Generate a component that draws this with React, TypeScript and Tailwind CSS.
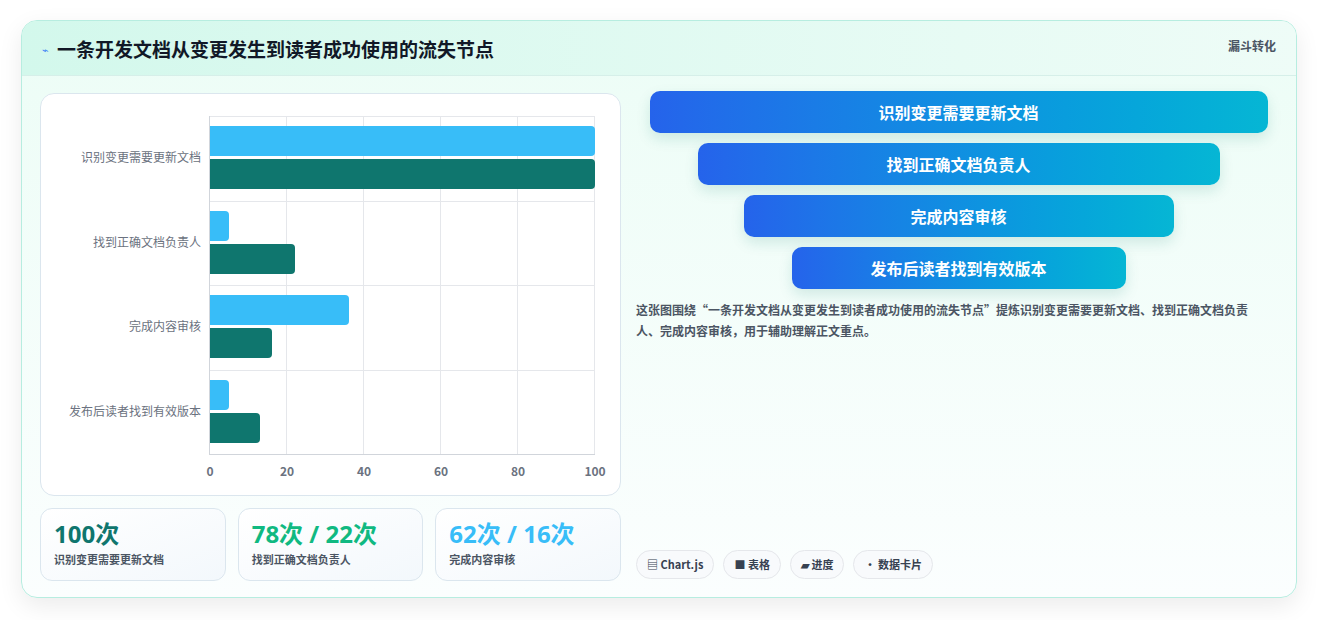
import React from "react";

const cats = [
  { l: "识别变更需要更新文档", a: 100, b: 100 },
  { l: "找到正确文档负责人", a: 5, b: 22 },
  { l: "完成内容审核", a: 36, b: 16 },
  { l: "发布后读者找到有效版本", a: 5, b: 13 },
];
const funnel = [
  { t: "识别变更需要更新文档", w: 618 },
  { t: "找到正确文档负责人", w: 522 },
  { t: "完成内容审核", w: 430 },
  { t: "发布后读者找到有效版本", w: 334 },
];
const font = { fontFamily: '"Noto Sans CJK SC", "Noto Sans", sans-serif' };

export default function App() {
  return (
    <div className="w-[1318px] h-[620px] bg-white pt-[20px] pl-[21px]" style={font}>
      <div className="w-[1276px] h-[578px] rounded-[16px] border border-[#b7ede0] bg-gradient-to-b from-[#ecfdf6] to-[#fbfefe] shadow-[0_8px_24px_rgba(0,0,0,0.08)] overflow-hidden flex flex-col">
        <div className="h-[55px] shrink-0 flex items-start justify-between px-[20px] pt-[14px] bg-gradient-to-r from-[#d3f8ec] to-[#eefcf7] border-b border-[#d6efe9]">
          <div className="flex items-center gap-[8px]">
            <span className="text-[#3b82f6] text-[11px]">⌁</span>
            <span className="text-[19px] font-bold text-[#111827] leading-[28px]">一条开发文档从变更发生到读者成功使用的流失节点</span>
          </div>
          <span className="text-[12px] font-bold text-[#4b5563] mt-[2px]">漏斗转化</span>
        </div>
        <div className="flex flex-1 pl-[18px] pt-[17px] gap-[15px]">
          <div className="w-[581px] flex flex-col gap-[12px]">
            <div className="h-[403px] rounded-[14px] border border-[#dbe6ee] bg-white relative">
              <div className="absolute left-[168px] top-[22px] w-[386px] h-[339px] border-l border-b border-[#d1d5db]">
                {[1, 2, 3, 4, 5].map((i) => (
                  <div key={i} className="absolute top-0 bottom-0 w-px bg-[#e5e7eb]" style={{ left: i * 77 - 1 }} />
                ))}
                {[1, 2, 3].map((i) => (
                  <div key={i} className="absolute left-0 right-0 h-px bg-[#e5e7eb]" style={{ top: i * 84.5 }} />
                ))}
                <div className="absolute left-0 right-0 top-0 h-px bg-[#e5e7eb]" />
                {cats.map((c, i) => (
                  <div key={i} className="absolute left-0" style={{ top: i * 84.5 + 10 }}>
                    <div className="h-[30px] bg-[#38bdf8] rounded-r-[4px] mb-[3px]" style={{ width: c.a * 3.85 }} />
                    <div className="h-[30px] bg-[#0f766e] rounded-r-[4px]" style={{ width: c.b * 3.85 }} />
                  </div>
                ))}
                {cats.map((c, i) => (
                  <div key={"l" + i} className="absolute right-[394px] text-[12px] text-[#6b7280] whitespace-nowrap" style={{ top: i * 84.5 + 32 }}>{c.l}</div>
                ))}
                {[0, 20, 40, 60, 80, 100].map((v, i) => (
                  <div key={v} className="absolute top-[346px] text-[12px] font-bold text-[#6b7280] -translate-x-1/2" style={{ left: i * 77 }}>{v}</div>
                ))}
              </div>
            </div>
            <div className="flex gap-[12px]">
              {[
                { v: "100次", c: "text-[#0f766e]", l: "识别变更需要更新文档" },
                { v: "78次 / 22次", c: "text-[#10b981]", l: "找到正确文档负责人" },
                { v: "62次 / 16次", c: "text-[#38bdf8]", l: "完成内容审核" },
              ].map((s) => (
                <div key={s.l} className="w-[186px] h-[73px] rounded-[12px] border border-[#dbe6ee] bg-gradient-to-br from-white to-[#f3f8fc] px-[13px] pt-[10px]">
                  <div className={`text-[24px] font-bold leading-[30px] ${s.c}`} style={{ fontFamily: '"Open Sans", "Noto Sans CJK SC", sans-serif' }}>{s.v}</div>
                  <div className="text-[11px] font-bold text-[#4b5563] mt-[2px]">{s.l}</div>
                </div>
              ))}
            </div>
          </div>
          <div className="w-[645px] flex flex-col pb-[18px]">
            <div className="flex flex-col items-center gap-[10px] -mt-[2px]">
              {funnel.map((f) => (
                <div key={f.t} className="h-[42px] rounded-[10px] bg-gradient-to-r from-[#2563eb] to-[#06b6d4] text-white font-bold text-[16px] flex items-center justify-center shadow-[0_6px_14px_rgba(15,118,110,0.15)]" style={{ width: f.w }}>{f.t}</div>
              ))}
            </div>
            <p className="mt-[10px] text-[12px] font-bold text-[#4b5563] leading-[21px] pr-[10px]">这张图围绕“一条开发文档从变更发生到读者成功使用的流失节点”提炼识别变更需要更新文档、找到正确文档负责人、完成内容审核，用于辅助理解正文重点。</p>
            <div className="mt-auto flex gap-[9px]">
              {["▤ Chart.js", "■ 表格", "▰ 进度", "• 数据卡片"].map((t) => (
                <span key={t} className="h-[29px] px-[10px] rounded-full border border-[#e5e7eb] bg-[#f8fafc] text-[11px] font-bold text-[#374151] flex items-center">{t}</span>
              ))}
            </div>
          </div>
        </div>
      </div>
    </div>
  );
}
